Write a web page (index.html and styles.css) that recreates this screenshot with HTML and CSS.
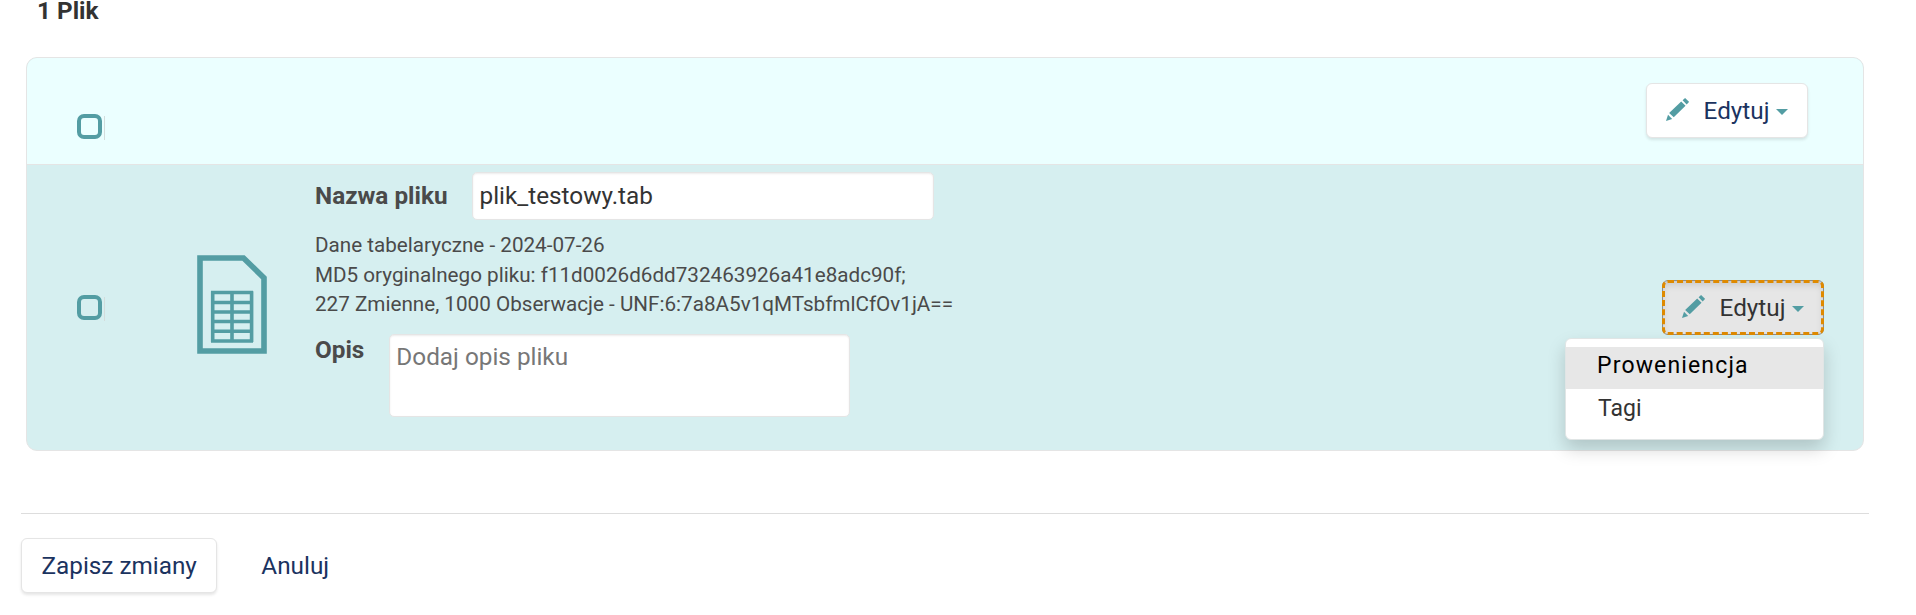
FILE: index.html
```
<!DOCTYPE html>
<html lang="pl">
<head>
<meta charset="utf-8">
<title>Edycja plików</title>
<link rel="stylesheet" href="styles.css">
</head>
<body>
<svg width="0" height="0" class="sprites">
  <symbol id="pencil" viewBox="0 0 25 25">
    <path d="M0 25 2.2 18.3 6.7 22.8ZM3.4 16.2 16.5 3.8 21.2 8.5 8.4 21ZM18 2.5 20.7 0 25 4.2 22.4 7Z"/>
  </symbol>
</svg>
<main class="page">
  <h2 class="count">1 Plik</h2>
  <section class="files">
    <div class="files-head">
      <div class="check"><span class="box"></span><span class="tick"></span></div>
      <button class="btn btn-edit"><svg class="pencil"><use href="#pencil"/></svg><span>Edytuj</span><i class="caret"></i></button>
    </div>
    <div class="file-row">
      <div class="check"><span class="box"></span><span class="tick"></span></div>
      <svg class="file-icon" viewBox="0 0 70 100">
        <path d="M3 3H46.5L67 23V96H3Z" fill="none" stroke-width="5.600"/>
        <path d="M14 37.500H56M14 47.500H56M14 57H55M14 66.500H56M14 76.300H56M14 86H56" fill="none" stroke-width="3.400"/>
        <path d="M15.700 36.200V87M35 36.200V87M54.600 36.200V87" fill="none" stroke-width="3.600"/>
      </svg>
      <div class="details">
        <div class="field name"><label for="name">Nazwa pliku</label><input id="name" class="control" value="plik_testowy.tab"></div>
        <div class="meta">
          <div>Dane tabelaryczne - 2024-07-26</div>
          <div>MD5 oryginalnego pliku: f11d0026d6dd732463926a41e8adc90f;</div>
          <div>227 Zmienne, 1000 Obserwacje - UNF:6:7a8A5v1qMTsbfmlCfOv1jA==</div>
        </div>
        <div class="field"><label for="desc">Opis</label><textarea id="desc" class="control" placeholder="Dodaj opis pliku"></textarea></div>
      </div>
      <div class="dropdown">
        <button class="btn btn-edit is-open"><svg class="pencil"><use href="#pencil"/></svg><span>Edytuj</span><i class="caret"></i></button>
        <div class="menu">
          <a class="item is-active">Proweniencja</a>
          <a class="item">Tagi</a>
        </div>
      </div>
    </div>
  </section>
  <footer class="actions">
    <button class="btn">Zapisz zmiany</button>
    <button class="btn btn-link">Anuluj</button>
  </footer>
</main>
</body>
</html>
```
FILE: styles.css
```
* { box-sizing: border-box; }
body {
  margin: 0;
  background: #fff;
  color: #333;
  font: 24.300px/34px Roboto, sans-serif;
  overflow: hidden;
}
.sprites { position: absolute; }
.page { height: 615px; padding: 0 47px 0 21px; }
.count {
  height: 57px;
  margin: 0 0 0 16px;
  font-size: 24.300px;
  line-height: 22px;
  font-weight: 700;
}
.files {
  width: 1838px;
  height: 394px;
  margin-left: 5px;
  border: 1px solid #e5e5e5;
  border-radius: 11px;
  background: #d6eff0;
}
.files-head {
  display: flex;
  justify-content: space-between;
  height: 107px;
  padding: 25px 55px 0 50px;
  border-bottom: 1px solid #e5e5e5;
  border-radius: 10px 10px 0 0;
  background: #ebffff;
}
.files-head .check { margin-top: 31px; }
.check { display: flex; gap: 2px; width: 100px; height: 25px; }
.box { width: 25px; height: 25px; border: 4.500px solid #539da3; border-radius: 7px; }
.tick { width: 1px; height: 24px; margin-top: 2px; background: #d3dcdc; }
.file-row { display: flex; height: 285px; padding: 7px 39px 0 50px; }
.file-row .check { margin-top: 123px; }
.file-icon { width: 70px; height: 100px; margin: 83px 0 0 20px; stroke: #539da3; }
.details { width: 680px; margin-left: 48px; }
.field { display: flex; align-items: flex-start; color: #4a4a4a; font-weight: 700; }
.field.name { align-items: center; }
.field label { margin-right: 24.500px; }
.field:not(.name) label { margin-top: -1px; }
.control {
  width: 461.500px;
  height: 48px;
  padding: 3px 6.500px 5px;
  border: 1px solid #e5e5e5;
  border-radius: 5px;
  background: #fff;
  box-shadow: inset 0 1px 2px rgba(0, 0, 0, .08);
  color: #333;
  font: 24.300px/34px Roboto, sans-serif;
}
textarea.control { height: 83px; padding-top: 5px; resize: none; }
.control::placeholder { color: #777; }
.meta { margin: 11px 0 14.500px; color: #4a4a4a; font-size: 20.670px; line-height: 29.500px; white-space: nowrap; }
.btn {
  display: flex;
  align-items: center;
  justify-content: center;
  height: 55px;
  padding: 0 19.500px;
  border: 1px solid #e5e5e5;
  border-radius: 6px;
  background: #fff;
  box-shadow: 0 2px 3px rgba(0, 0, 0, .1);
  color: #1b335f;
  font: 24.300px/34px Roboto, sans-serif;
}
.btn-edit { width: 162px; padding: 0 19px; justify-content: flex-start; }
.pencil { width: 25px; height: 25px; margin: -3px 14.500px 0 0; fill: #539da3; }
.caret {
  margin: 3px 0 0 6.500px;
  border: 6px solid transparent;
  border-top-color: #539da3;
  border-bottom: 0;
}
.dropdown { position: relative; margin: 108px 0 0 auto; }
.is-open {
  border-color: #8c8c8c;
  background: #e6e6e6;
  color: #333;
  outline: 3px dashed #df8a00;
  outline-offset: -3px;
  box-shadow: inset 0 4px 7px rgba(0, 0, 0, .125);
}
.menu {
  position: absolute;
  top: 58px;
  right: 0;
  width: 259px;
  height: 102px;
  padding: 8px 0;
  border: 1px solid #e0e5e5;
  border-radius: 6px;
  background: #fff;
  box-shadow: 0 9px 18px rgba(0, 0, 0, .175);
}
.item { display: block; height: 42px; padding-left: 32px; color: #333; font-size: 23px; line-height: 39px; }
.item.is-active { padding-left: 31px; background: #e7e7e7; color: #000; line-height: 37px; letter-spacing: 1.150px; }
.actions {
  display: flex;
  gap: 27px;
  width: 1848px;
  margin-top: 62px;
  padding-top: 24px;
  border-top: 1px solid #ddd;
}
.btn-link { padding: 0 16px; border-color: transparent; background: none; box-shadow: none; }
```
